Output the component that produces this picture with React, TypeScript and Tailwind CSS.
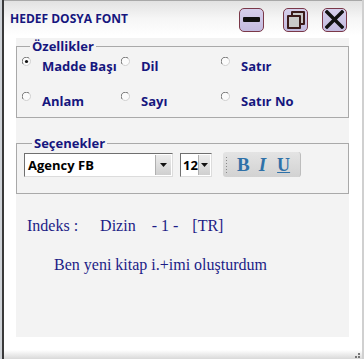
import React from "react";

const navy = "text-[#16167e]";

function Radio({ checked }: { checked?: boolean }) {
  return (
    <svg width="9" height="9" viewBox="0 0 9 9" className="shrink-0">
      <circle cx="4.5" cy="4.5" r="4" fill="#fbfbfb" />
      <path d="M1.4 7.3 A4 4 0 0 1 7.3 1.4" stroke="#6a6a6a" strokeWidth="1" fill="none" />
      <path d="M7.3 1.4 A4 4 0 0 1 1.4 7.3" stroke="#d0d0d0" strokeWidth="1" fill="none" />
      {checked && <circle cx="4.5" cy="4.5" r="1.6" fill="#111" />}
    </svg>
  );
}

function RadioItem({ label, checked }: { label: string; checked?: boolean }) {
  return (
    <div className="flex items-start">
      <div className="mt-[0px]">
        <Radio checked={checked} />
      </div>
      <span className={`ml-[11px] text-[13px] leading-[18px] font-bold ${navy}`}>{label}</span>
    </div>
  );
}

function TitleButton({ children }: { children: React.ReactNode }) {
  return (
    <div className="w-[25px] h-[24px] rounded-[5px] border border-[#7a3848] bg-gradient-to-b from-[#d6cfec] to-[#c3bbdf] flex items-center justify-center">
      {children}
    </div>
  );
}

function Arrow() {
  return (
    <div className="w-[16px] h-full bg-gradient-to-b from-[#ededed] to-[#cfcfcf] border-l border-[#b0b0b0] flex items-center justify-center">
      <svg width="7" height="4" viewBox="0 0 7 4">
        <path d="M0 0 H7 L3.5 4 Z" fill="#111" />
      </svg>
    </div>
  );
}

export default function App() {
  return (
    <div
      className="w-[364px] h-[359px] flex bg-white overflow-hidden"
      style={{ fontFamily: '"Open Sans", "Liberation Sans", Arial, sans-serif' }}
    >
      <div className="w-[2px] bg-[#cfd3d8]" />
      <div className="w-[2px] bg-[#3a3a3a]" />
      <div className="flex-1 flex flex-col border-t border-[#a8a8a8]">
        {/* title bar */}
        <div className="h-[35px] flex items-center bg-gradient-to-b from-[#e2e2e2] via-[#f6f6f6] to-white">
          <span className={`ml-[6px] text-[12px] font-bold ${navy}`}>HEDEF DOSYA FONT</span>
          <div className="ml-auto flex items-center pr-[15px] mt-[2px]">
            <TitleButton>
              <div className="w-[17px] h-[5px] bg-[#111] rounded-[1px]" />
            </TitleButton>
            <div className="ml-[19px]">
              <TitleButton>
                <div className="relative w-[18px] h-[18px]">
                  <div className="absolute right-0 top-0 w-[14px] h-[14px] border-2 border-[#3a1a1a] rounded-[1px] bg-[#c9c9c9]" />
                  <div className="absolute left-0 bottom-0 w-[14px] h-[14px] border-2 border-[#3a1a1a] rounded-[1px] bg-[#c9c9c9]" />
                </div>
              </TitleButton>
            </div>
            <div className="ml-[14px]">
              <TitleButton>
                <svg width="19" height="19" viewBox="0 0 19 19">
                  <path d="M2 2 L17 17 M17 2 L2 17" stroke="#111" strokeWidth="3.4" strokeLinecap="square" />
                </svg>
              </TitleButton>
            </div>
          </div>
        </div>

        {/* body */}
        <div className="pl-[12px] pt-[2px]">
          <div className="w-[333px] h-[299px] bg-[#f3f3f3] flex flex-col">
            <fieldset className="border border-[#a9a9a9] pl-[5px] pt-[3px] pb-[7px]">
              <legend className={`ml-[8px] px-[2px] text-[13px] leading-[16px] font-bold ${navy}`}>Özellikler</legend>
              <div className="grid grid-cols-[99px_100px_1fr] gap-y-[17px]">
                <RadioItem label="Madde Başı" checked />
                <RadioItem label="Dil" />
                <RadioItem label="Satır" />
                <RadioItem label="Anlam" />
                <RadioItem label="Sayı" />
                <RadioItem label="Satır No" />
              </div>
            </fieldset>

            <fieldset className="mt-[17px] border border-[#a9a9a9] pl-[7px] pt-[1px] pb-[16px]">
              <legend className={`ml-[8px] px-[2px] text-[13px] leading-[16px] font-bold ${navy}`}>Seçenekler</legend>
              <div className="flex items-center">
                <div className="w-[149px] h-[24px] flex bg-white border border-t-[#6f6f6f] border-l-[#6f6f6f] border-r-[#dcdcdc] border-b-[#dcdcdc] p-[1px]">
                  <span className="flex-1 pl-[2px] text-[13px] leading-[20px] font-bold text-black">Agency FB</span>
                  <Arrow />
                </div>
                <div className="ml-[7px] w-[32px] h-[24px] flex bg-white border border-t-[#6f6f6f] border-l-[#6f6f6f] border-r-[#dcdcdc] border-b-[#dcdcdc] p-[1px]">
                  <span className="flex-1 pl-[1px] text-[13px] leading-[20px] font-bold text-black">12</span>
                  <Arrow />
                </div>
                <div className="ml-[11px] w-[78px] h-[25px] rounded-[3px] bg-gradient-to-b from-[#e4e4e4] to-[#d2d2d2] border-r border-[#bdbdbd] flex items-center">
                  <div className="ml-[3px] flex flex-col gap-[2px]">
                    <div className="w-[1px] h-[1px] bg-[#888]" />
                    <div className="w-[1px] h-[1px] bg-[#888]" />
                    <div className="w-[1px] h-[1px] bg-[#888]" />
                    <div className="w-[1px] h-[1px] bg-[#888]" />
                    <div className="w-[1px] h-[1px] bg-[#888]" />
                    <div className="w-[1px] h-[1px] bg-[#888]" />
                  </div>
                  <span
                    className="ml-[10px] text-[19px] font-bold text-[#2f71a8] leading-none"
                    style={{ fontFamily: '"Liberation Serif", serif' }}
                  >
                    B
                  </span>
                  <span
                    className="ml-[9px] text-[19px] font-bold italic text-[#2f71a8] leading-none"
                    style={{ fontFamily: '"Liberation Serif", serif' }}
                  >
                    I
                  </span>
                  <span
                    className="ml-[11px] text-[18px] font-bold underline text-[#2f71a8] leading-none"
                    style={{ fontFamily: '"Liberation Serif", serif' }}
                  >
                    U
                  </span>
                </div>
              </div>
            </fieldset>

            <div
              className="mt-[22px] pl-[11px] text-[16px] leading-[20px] text-[#1c1c86] flex"
              style={{ fontFamily: '"Liberation Serif", serif' }}
            >
              <span>Indeks :</span>
              <span className="ml-[22px]">Dizin</span>
              <span className="ml-[16px]">- 1 -</span>
              <span className="ml-[14px]">[TR]</span>
            </div>
            <div
              className="mt-[19px] pl-[38px] text-[16px] leading-[20px] text-[#1c1c86]"
              style={{ fontFamily: '"Liberation Serif", serif' }}
            >
              Ben yeni kitap i.+imi oluşturdum
            </div>
          </div>
        </div>

        {/* bottom */}
        <div className="flex-1" />
        <div className="h-[9px] bg-gradient-to-b from-white to-[#d9d9d9] relative">
          <div className="absolute right-[2px] bottom-[1px] grid grid-cols-3 gap-[1px]">
            <div className="w-[2px] h-[2px]" />
            <div className="w-[2px] h-[2px]" />
            <div className="w-[2px] h-[2px] bg-[#777]" />
            <div className="w-[2px] h-[2px]" />
            <div className="w-[2px] h-[2px] bg-[#777]" />
            <div className="w-[2px] h-[2px] bg-[#777]" />
          </div>
        </div>
      </div>
      <div className="w-[2px] bg-[#d0d0d0]" />
    </div>
  );
}
